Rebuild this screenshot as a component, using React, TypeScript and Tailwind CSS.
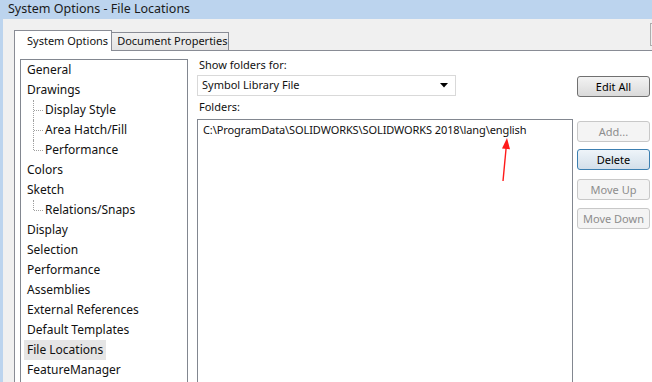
import React from "react";

type TreeItem = { label: string; child?: boolean; last?: boolean; selected?: boolean };

const treeItems: TreeItem[] = [
  { label: "General" },
  { label: "Drawings" },
  { label: "Display Style", child: true },
  { label: "Area Hatch/Fill", child: true },
  { label: "Performance", child: true, last: true },
  { label: "Colors" },
  { label: "Sketch" },
  { label: "Relations/Snaps", child: true, last: true },
  { label: "Display" },
  { label: "Selection" },
  { label: "Performance" },
  { label: "Assemblies" },
  { label: "External References" },
  { label: "Default Templates" },
  { label: "File Locations", selected: true },
  { label: "FeatureManager" },
];

function TreeRow({ item }: { item: TreeItem }) {
  return (
    <div className="relative h-[20px] flex items-center">
      {item.child && (
        <>
          {/* tree connector lines */}
          <span
            className={`absolute left-[12px] top-0 border-l border-dotted border-[#a0a0a0] ${
              item.last ? "h-[10px]" : "h-[20px]"
            }`}
          />
          <span className="absolute left-[13px] top-[10px] w-[9px] border-t border-dotted border-[#a0a0a0]" />
        </>
      )}
      <span
        className={`${item.child ? "ml-[21px]" : "ml-[3px]"} px-[3px] h-[20px] leading-[20px] ${
          item.selected ? "bg-[#e5e5e5]" : ""
        }`}
      >
        {item.label}
      </span>
    </div>
  );
}

function Button({ label, disabled, focused }: { label: string; disabled?: boolean; focused?: boolean }) {
  let cls = "bg-gradient-to-b from-[#f3f3f3] to-[#dadada] border-[#707070] text-black";
  if (disabled) cls = "bg-[#f4f4f4] border-[#c8c8c8] text-[#8d8d8d]";
  if (focused) cls = "bg-gradient-to-b from-[#eef4f9] to-[#d3dfea] border-[#3c7fb1] text-black";
  return (
    <div
      className={`w-[73px] h-[21px] border rounded-[3px] flex items-center justify-center leading-none text-[11px] ${cls}`}
    >
      {label}
    </div>
  );
}

export default function App() {
  return (
    <div
      className="w-[652px] h-[382px] overflow-hidden bg-[#bcd4ee] flex flex-col text-[12px] text-[#111]"
      style={{ fontFamily: '"Noto Sans", "Open Sans", sans-serif' }}
    >
      {/* title bar */}
      <div className="h-[19px] pl-[8px] text-[12.5px] leading-[18px] text-[#1a1a1a]">
        System Options - File Locations
      </div>

      <div className="flex-1 ml-[3px] bg-[#f0f0f0] flex flex-col min-h-0">
        {/* tabs */}
        <div className="h-[31px] flex items-end pl-[11px] relative text-[11px]">
          <div className="h-[21px] pl-[12px] pr-[3px] bg-white border border-b-0 border-[#898c95] flex items-center relative z-10 -mb-px">
            System Options
          </div>
          <div className="h-[18px] pl-[5px] pr-[1px] bg-gradient-to-b from-[#f2f2f2] to-[#e3e3e3] border border-l-0 border-b-0 border-[#898c95] flex items-center">
            Document Properties
          </div>
          <div className="absolute left-[647px] top-[4px] w-[10px] h-[23px] border border-[#adadad] bg-[#f0f0f0]" />
        </div>

        {/* tab panel */}
        <div className="flex-1 ml-[11px] bg-white border-l border-t border-[#898c95] flex items-start pl-[5px] pt-[8px] min-h-0">
          {/* options tree */}
          <div className="w-[168px] h-[340px] border border-[#828790] bg-white">
            {treeItems.map((item, i) => (
              <TreeRow key={i} item={item} />
            ))}
          </div>

          {/* right side */}
          <div className="ml-[9px] -mt-[2px] flex items-start text-[11px]">
            <div className="w-[376px] flex flex-col">
              <div className="h-[16px] leading-[16px] pl-[2px]">Show folders for:</div>
              <div className="mt-[2px] w-[259px] h-[21px] border border-[#d9d9d9] bg-white flex items-center pl-[4px] pr-[7px]">
                <span className="flex-1">Symbol Library File</span>
                <svg width="8" height="5" viewBox="0 0 8 5">
                  <polygon points="0,0 8,0 4,4.5" fill="#000" />
                </svg>
              </div>
              <div className="mt-[3px] h-[16px] leading-[16px] pl-[2px]">Folders:</div>
              <div className="mt-[4px] h-[280px] border border-[#828790] bg-white relative">
                <div className="pl-[5px] pt-[1px] h-[17px] leading-[17px] tracking-[-0.1px]">
                  C:\ProgramData\SOLIDWORKS\SOLIDWORKS 2018\lang\english
                </div>
                {/* red annotation arrow */}
                <svg
                  className="absolute left-[298px] top-[16px]"
                  width="20"
                  height="50"
                  viewBox="0 0 20 50"
                >
                  <line x1="7" y1="45" x2="10.4" y2="9" stroke="#ff1a1a" strokeWidth="1.4" />
                  <polygon points="11,2 14,13.3 6,12.6" fill="#ff1a1a" />
                </svg>
              </div>
            </div>

            <div className="ml-[4px] mt-[19px] flex flex-col">
              <Button label="Edit All" />
              <div className="mt-[24px]">
                <Button label="Add..." disabled />
              </div>
              <div className="mt-[7px]">
                <Button label="Delete" focused />
              </div>
              <div className="mt-[9px]">
                <Button label="Move Up" disabled />
              </div>
              <div className="mt-[8px]">
                <Button label="Move Down" disabled />
              </div>
            </div>
          </div>
        </div>
      </div>
    </div>
  );
}
